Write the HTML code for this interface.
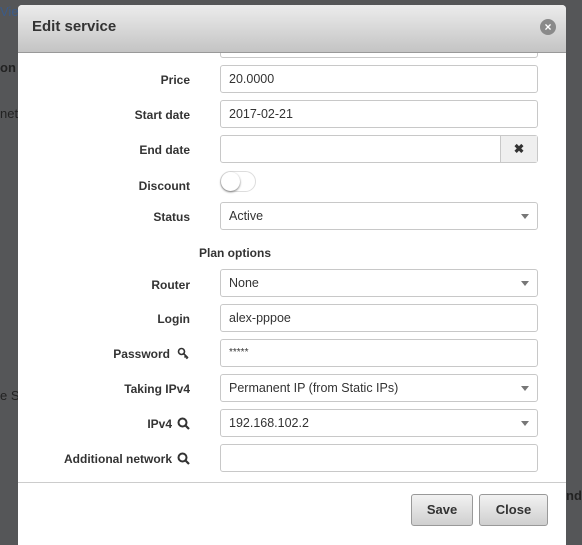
<!DOCTYPE html>
<html><head><style>
body{margin:0;width:582px;height:539px;overflow:hidden;background:#555658;font-family:"Liberation Sans",sans-serif;position:relative}
.bg{position:absolute;color:#1d2b3a;font-size:13px}
.l{position:absolute;right:392px;font-size:12px;font-weight:bold;color:#333;text-align:right}
.i{position:absolute;left:220px;height:26px;border:1px solid #c8c8c8;border-radius:3px;background:#fff;font-size:12.5px;color:#333;line-height:26px;padding-left:8px;width:308px}
.car{position:absolute;right:8px;top:11px;width:0;height:0;border-left:4px solid transparent;border-right:4px solid transparent;border-top:5px solid #777}
.btn{position:absolute;top:494px;height:30px;border:1px solid #999;border-radius:3px;background:linear-gradient(#f2f2f2,#cfcfcf);font-size:13px;font-weight:bold;color:#333;text-align:center;line-height:30px}
</style></head><body>
<div class="bg" style="left:0;top:4px;color:#3b5b88">View</div>
<div class="bg" style="left:0;top:60px;font-weight:bold;color:#222">on</div>
<div class="bg" style="left:0;top:106px;color:#222">net</div>
<div class="bg" style="left:0;top:388px;color:#222">e Se</div>
<div class="bg" style="left:566px;top:488px;color:#222;font-weight:bold">nd</div>
<div style="position:absolute;left:18px;top:5px;width:548px;height:540px;background:#fff;border-radius:4px 4px 0 0"></div>
<div class="i" style="top:30px"></div>
<div style="position:absolute;left:18px;top:5px;width:548px;height:47px;background:linear-gradient(#ececec,#c4c4c4);border-bottom:1px solid #999;border-radius:4px 4px 0 0">
  <div style="position:absolute;left:14px;top:13px;font-size:15px;font-weight:bold;color:#333">Edit service</div>
  <div style="position:absolute;right:10px;top:14px;width:16px;height:16px;border-radius:50%;background:#8a8a8a;color:#fff;font-size:12px;line-height:16px;text-align:center;font-weight:bold">×</div>
</div>
<div class="l" style="top:73px">Price</div><div class="i" style="top:65px">20.0000</div>
<div class="l" style="top:108px">Start date</div><div class="i" style="top:100px">2017-02-21</div>
<div class="l" style="top:143px">End date</div><div class="i" style="top:135px"><div style="position:absolute;right:0;top:0;width:36px;height:26px;background:#efefef;border-left:1px solid #c8c8c8;text-align:center;font-weight:bold;color:#333">✖</div></div>
<div class="l" style="top:179px">Discount</div>
<div style="position:absolute;left:220px;top:171px;width:34px;height:19px;border:1px solid #ddd;border-radius:11px;background:#fff"><div style="position:absolute;left:0;top:0;width:19px;height:19px;border-radius:50%;background:#fff;box-shadow:0 1px 2px #777"></div></div>
<div class="l" style="top:210px">Status</div><div class="i" style="top:202px">Active<div class="car"></div></div>
<div style="position:absolute;left:199px;top:246px;font-size:12px;font-weight:bold;color:#333">Plan options</div>
<div class="l" style="top:278px">Router</div><div class="i" style="top:269px">None<div class="car"></div></div>
<div class="l" style="top:312px">Login</div><div class="i" style="top:304px">alex-pppoe</div>
<div class="l" style="top:347px;right:412px">Password</div>
<svg style="position:absolute;left:177px;top:347px" width="13" height="13"><circle cx="4.5" cy="4.5" r="3" fill="none" stroke="#333" stroke-width="1.6"/><path d="M6.5 6.5l4.5 4.5M9 9l-1.5 1.5M10.5 10.5l-1.2 1.2" stroke="#333" stroke-width="1.6"/></svg>
<div class="i" style="top:339px;font-size:10px">*****</div>
<div class="l" style="top:382px">Taking IPv4</div><div class="i" style="top:374px">Permanent IP (from Static IPs)<div class="car"></div></div>
<div class="l" style="top:417px;right:410px">IPv4</div>
<svg style="position:absolute;left:177px;top:417px" width="13" height="13"><circle cx="5.5" cy="5.5" r="4" fill="none" stroke="#333" stroke-width="2"/><path d="M8.5 8.5l3.5 3.5" stroke="#333" stroke-width="2.2"/></svg>
<div class="i" style="top:409px">192.168.102.2<div class="car"></div></div>
<div class="l" style="top:452px;right:410px">Additional network</div>
<svg style="position:absolute;left:177px;top:452px" width="13" height="13"><circle cx="5.5" cy="5.5" r="4" fill="none" stroke="#333" stroke-width="2"/><path d="M8.5 8.5l3.5 3.5" stroke="#333" stroke-width="2.2"/></svg>
<div class="i" style="top:444px"></div>
<div style="position:absolute;left:18px;top:482px;width:548px;height:1px;background:#ccc"></div>
<div class="btn" style="left:411px;width:60px">Save</div>
<div class="btn" style="left:479px;width:67px">Close</div>
</body></html>
